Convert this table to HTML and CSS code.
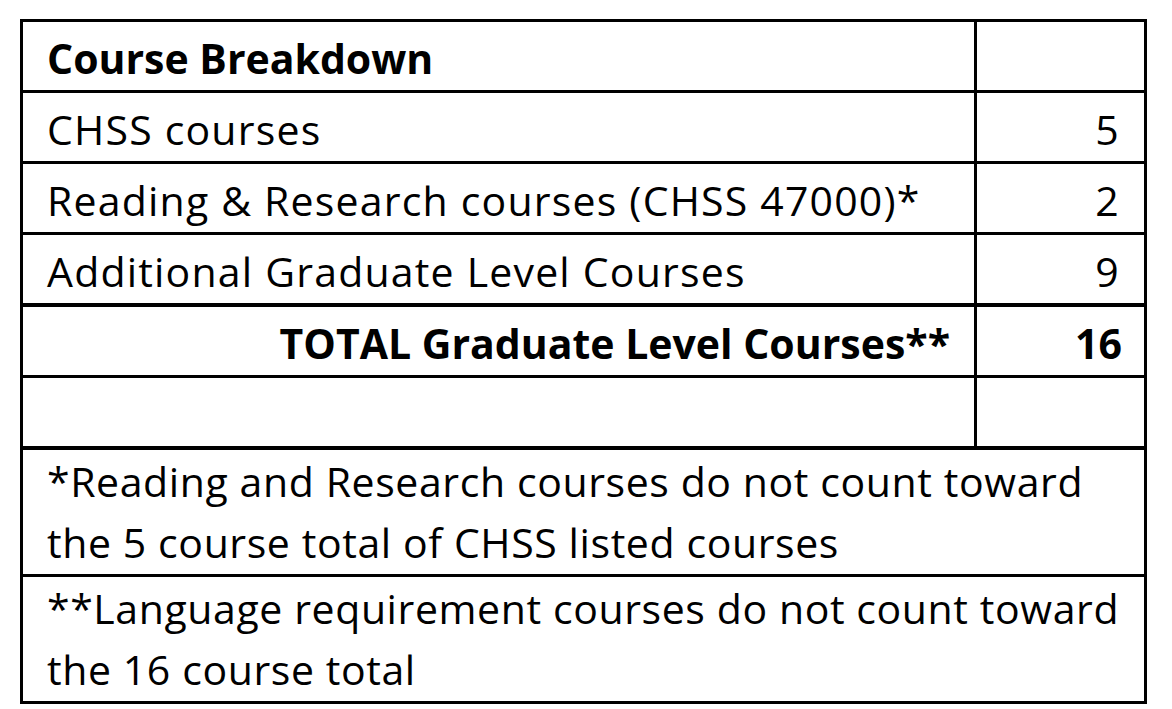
FILE: index.html
```html
<!DOCTYPE html>
<html>
<head>
<meta charset="utf-8">
<link rel="stylesheet" href="styles.css">
</head>
<body>
<table class="breakdown">
  <tr class="row">
    <td class="label head">Course Breakdown</td>
    <td class="num"></td>
  </tr>
  <tr class="row">
    <td class="label">CHSS courses</td>
    <td class="num">5</td>
  </tr>
  <tr class="row">
    <td class="label">Reading &amp; Research courses (CHSS 47000)*</td>
    <td class="num">2</td>
  </tr>
  <tr class="row">
    <td class="label">Additional Graduate Level Courses</td>
    <td class="num">9</td>
  </tr>
  <tr class="row total">
    <td class="label head right">TOTAL Graduate Level Courses**</td>
    <td class="num head">16</td>
  </tr>
  <tr class="row blank">
    <td class="label"></td>
    <td class="num"></td>
  </tr>
  <tr class="note first-note">
    <td colspan="2">*Reading and Research courses do not count toward<br>the 5 course total of CHSS listed courses</td>
  </tr>
  <tr class="note">
    <td colspan="2">**Language requirement courses do not count toward<br>the 16 course total</td>
  </tr>
</table>
</body>
</html>
```

FILE: styles.css
```css
html, body {
  margin: 0;
  padding: 0;
  background: #ffffff;
}

body {
  padding: 19px 0 0 20px;
  font-family: "Open Sans", "Noto Sans", sans-serif;
  color: #000;
}

.breakdown {
  border-collapse: collapse;
  width: 1127px;
  border: 3px solid #000;
}

.breakdown td {
  border: 3px solid #000;
  padding: 0 24px;
  font-size: 41px;
  line-height: 56px;
  letter-spacing: 1.2px;
  vertical-align: middle;
  white-space: nowrap;
}

.breakdown .row td {
  height: 65px;
  padding-top: 3px;
}

.label {
  width: 903px;
  text-align: left;
}

.num {
  text-align: right;
}

.breakdown .head {
  font-weight: 700;
  letter-spacing: 0;
}

.breakdown .num.head {
  padding-right: 22px;
}

.right {
  text-align: right;
}

.total td {
  border-top-width: 4px;
  border-bottom-width: 3px;
}

.blank td {
  border-bottom-width: 4px;
}

.breakdown .note td {
  height: 124px;
  line-height: 61px;
  padding: 0 24px;
  letter-spacing: 0.6px;
}
```
